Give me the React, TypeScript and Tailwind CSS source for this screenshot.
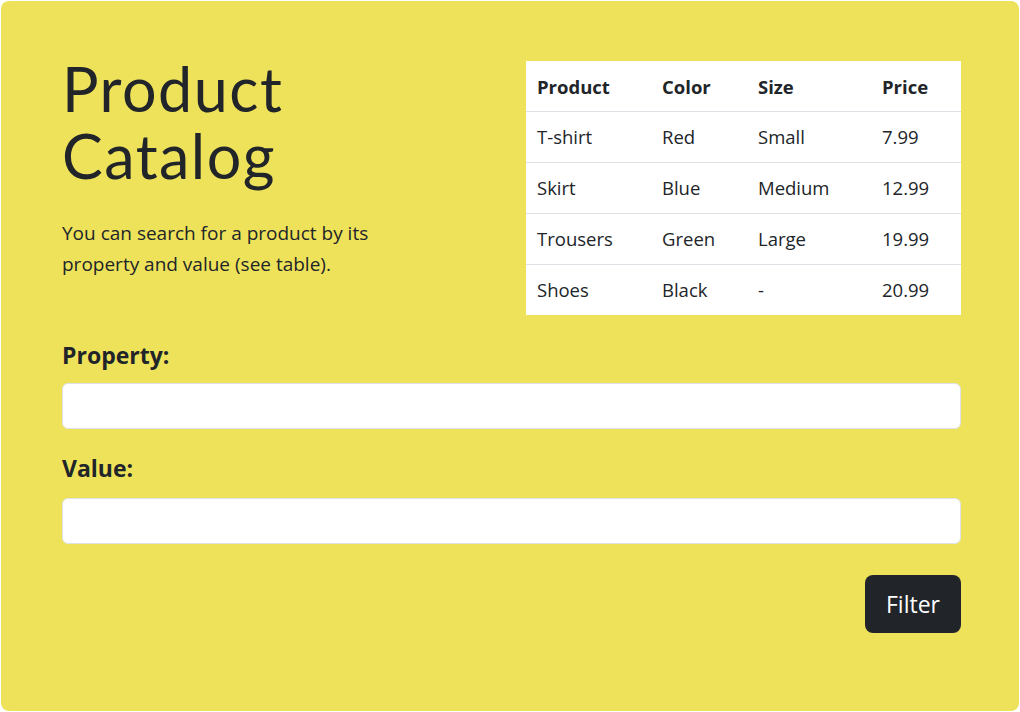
import React from 'react';

const rows = [
  ['T-shirt', 'Red', 'Small', '7.99'],
  ['Skirt', 'Blue', 'Medium', '12.99'],
  ['Trousers', 'Green', 'Large', '19.99'],
  ['Shoes', 'Black', '-', '20.99'],
];

export default function App() {
  return (
    <div className="w-[1020px] h-[712px] bg-white p-px font-['Open_Sans',sans-serif] text-[#212529]">
      <div className="h-full rounded-lg bg-[#eee25a] pl-[61px] pr-[58px] pt-[60px]">
        {/* Top: title + table */}
        <div className="flex justify-between">
          <div className="w-[340px]">
            <h1 className="-mt-[6px] font-['Lato',sans-serif] text-[61px] leading-[67px] tracking-[1.5px] font-normal">
              Product Catalog
            </h1>
            <p className="mt-[29px] text-[19px] leading-[31px]">
              You can search for a product by its property and value (see table).
            </p>
          </div>
          <table className="w-[435px] table-fixed bg-white text-[18.5px] border-collapse self-start">
            <colgroup>
              <col className="w-[125px]" />
              <col className="w-[96px]" />
              <col className="w-[124px]" />
              <col className="w-[90px]" />
            </colgroup>
            <thead>
              <tr className="h-[50px] border-b border-[#dee2e6]">
                <th className="pl-[11px] pt-[3px] text-left font-bold">Product</th>
                <th className="pl-[11px] pt-[3px] text-left font-bold">Color</th>
                <th className="pl-[11px] pt-[3px] text-left font-bold">Size</th>
                <th className="pl-[11px] pt-[3px] text-left font-bold">Price</th>
              </tr>
            </thead>
            <tbody>
              {rows.map((r, i) => (
                <tr key={r[0]} className={`h-[51px] ${i < rows.length - 1 ? 'border-b border-[#dee2e6]' : ''}`}>
                  {r.map((c, j) => (
                    <td key={j} className="pl-[11px] pt-[1px]">{c}</td>
                  ))}
                </tr>
              ))}
            </tbody>
          </table>
        </div>

        {/* Form */}
        <div className="mt-[24px]">
          <label className="block text-[23px] font-bold leading-[33px]">Property:</label>
          <input className="mt-[11px] block w-full h-[46px] rounded-md border border-[#dee2e6] bg-white px-3 outline-none" />
          <label className="mt-[23px] block text-[23px] font-bold leading-[33px]">Value:</label>
          <input className="mt-[13px] block w-full h-[46px] rounded-md border border-[#dee2e6] bg-white px-3 outline-none" />
          <div className="mt-[31px] flex justify-end">
            <button className="h-[58px] w-[96px] rounded-lg bg-[#212529] text-[23px] text-white">Filter</button>
          </div>
        </div>
      </div>
    </div>
  );
}
